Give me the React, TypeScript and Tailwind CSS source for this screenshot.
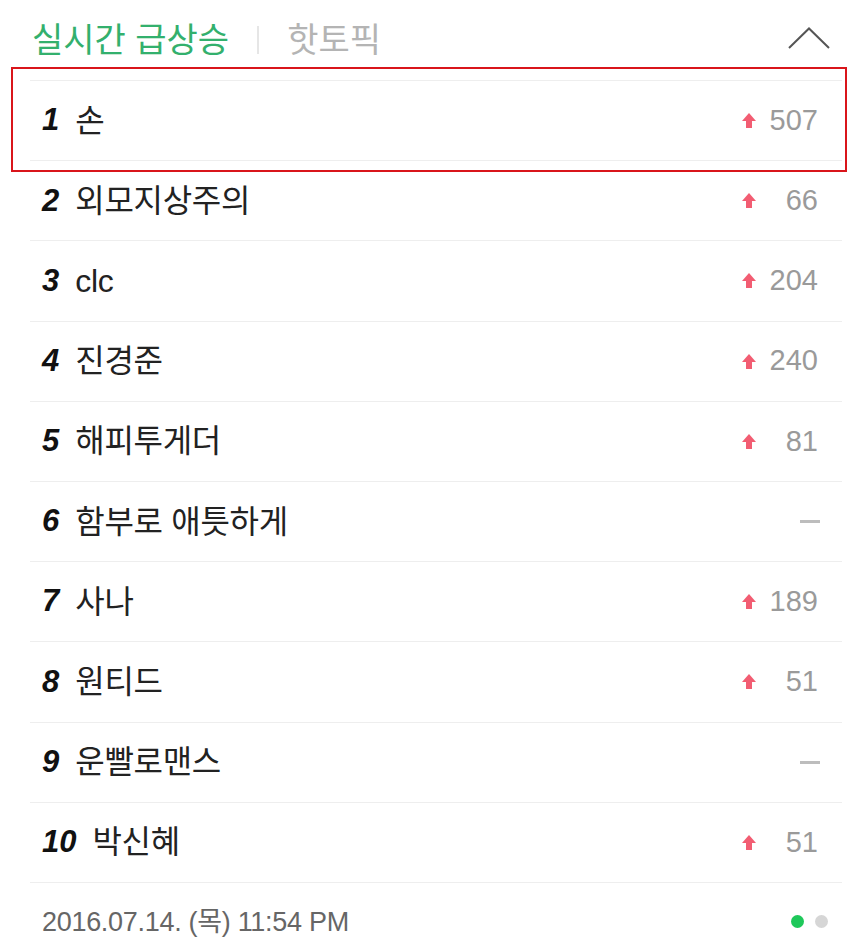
import React from 'react';

const rows: { rank: number; word: string; delta: number | null }[] = [
  { rank: 1, word: '손', delta: 507 },
  { rank: 2, word: '외모지상주의', delta: 66 },
  { rank: 3, word: 'clc', delta: 204 },
  { rank: 4, word: '진경준', delta: 240 },
  { rank: 5, word: '해피투게더', delta: 81 },
  { rank: 6, word: '함부로 애틋하게', delta: null },
  { rank: 7, word: '사나', delta: 189 },
  { rank: 8, word: '원티드', delta: 51 },
  { rank: 9, word: '운빨로맨스', delta: null },
  { rank: 10, word: '박신혜', delta: 51 },
];

const font = { fontFamily: '"Liberation Sans", "Noto Sans CJK KR", sans-serif' };

const UpArrow = () => (
  <svg width="16" height="17" viewBox="0 0 16 17" className="shrink-0">
    <path d="M8 1 L15 9 L11 9 L11 16 L5 16 L5 9 L1 9 Z" fill="#f25d72" />
  </svg>
);

const App = () => {
  return (
    <div className="relative w-[865px] h-[937px] bg-white overflow-hidden" style={font}>
      <div className="pl-[30px] pr-[23px]">
        {/* header tabs */}
        <div className="h-[80px] flex items-center">
          <span className="text-[34px] text-[#33b06d] pl-[2px]">실시간 급상승</span>
          <span className="mx-[28px] w-[2px] h-[28px] bg-[#e6e6e6]"></span>
          <span className="text-[34px] text-[#b4b4b4]">핫토픽</span>
          <div className="ml-auto mr-[12px] -mt-[4px]">
            <svg width="42" height="22" viewBox="0 0 42 22">
              <path d="M1 21 L21 1.5 L41 21" fill="none" stroke="#555" strokeWidth="2" />
            </svg>
          </div>
        </div>

        {rows.map((r) => (
          <div key={r.rank} className="h-[80.2px] border-t border-[#eeeeee] flex items-center pl-[12px] pr-[24px]">
            <span className="text-[31px] font-bold italic text-[#111] mr-[16px]">{r.rank}</span>
            <span className="text-[32px] text-[#222] tracking-[-0.3px]">{r.word}</span>
            <div className="ml-auto flex items-center">
              {r.delta === null ? (
                <span className="block w-[20px] h-[3px] bg-[#bdbdbd] mr-[-2px]"></span>
              ) : (
                <>
                  <UpArrow />
                  <span className="w-[61px] text-right text-[29px] text-[#9a9a9a]">{r.delta}</span>
                </>
              )}
            </div>
          </div>
        ))}

        {/* footer */}
        <div className="h-[55px] border-t border-[#eeeeee] flex items-start pt-[19px] pl-[12px] pr-[14px]">
          <span className="text-[27px] leading-[40px] text-[#666] tracking-[-0.3px]">2016.07.14. (목) 11:54 PM</span>
          <div className="ml-auto h-[40px] flex items-center gap-[11px]">
            <span className="w-[13px] h-[13px] rounded-full bg-[#1ec85a]"></span>
            <span className="w-[13px] h-[13px] rounded-full bg-[#d6d6d6]"></span>
          </div>
        </div>
      </div>

      {/* annotation box */}
      <div className="absolute left-[11px] top-[67px] w-[836px] h-[105px] border-2 border-[#d9151b] pointer-events-none"></div>
    </div>
  );
};

export default App;
